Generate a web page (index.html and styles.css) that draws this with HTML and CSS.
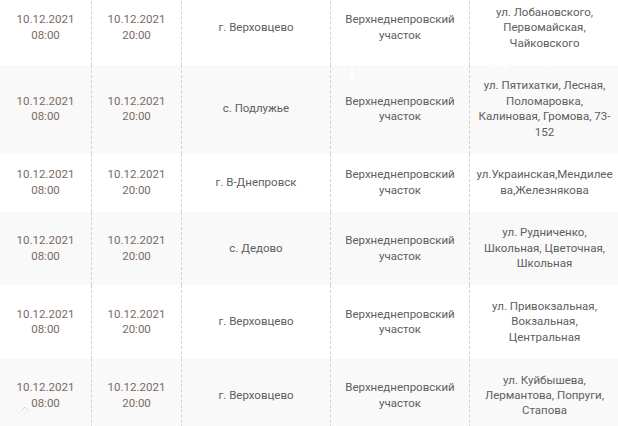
FILE: index.html
```html
<!DOCTYPE html>
<html lang="ru">
<head>
<meta charset="utf-8">
<title>Отключения</title>
<link rel="stylesheet" href="styles.css">
</head>
<body>
<div class="wrap">
  <table class="schedule">
    <colgroup>
      <col class="c-start"><col class="c-end"><col class="c-place"><col class="c-area"><col class="c-streets">
    </colgroup>
    <tbody>
      <tr>
        <td class="date">10.12.2021<br>08:00</td>
        <td class="date">10.12.2021<br>20:00</td>
        <td>г. Верховцево</td>
        <td>Верхнеднепровский участок</td>
        <td class="streets">ул. Лобановского, Первомайская, Чайковского</td>
      </tr>
      <tr>
        <td class="date">10.12.2021<br>08:00</td>
        <td class="date">10.12.2021<br>20:00</td>
        <td>с. Подлужье</td>
        <td>Верхнеднепровский участок</td>
        <td class="streets">ул. Пятихатки, Лесная, Поломаровка, Калиновая, Громова, 73-152</td>
      </tr>
      <tr>
        <td class="date">10.12.2021<br>08:00</td>
        <td class="date">10.12.2021<br>20:00</td>
        <td>г. В-Днепровск</td>
        <td>Верхнеднепровский участок</td>
        <td class="streets">ул.Украинская,Мендилеева,Железнякова</td>
      </tr>
      <tr>
        <td class="date">10.12.2021<br>08:00</td>
        <td class="date">10.12.2021<br>20:00</td>
        <td>с. Дедово</td>
        <td>Верхнеднепровский участок</td>
        <td class="streets">ул. Рудниченко, Школьная, Цветочная, Школьная</td>
      </tr>
      <tr>
        <td class="date">10.12.2021<br>08:00</td>
        <td class="date">10.12.2021<br>20:00</td>
        <td>г. Верховцево</td>
        <td>Верхнеднепровский участок</td>
        <td class="streets">ул. Привокзальная, Вокзальная, Центральная</td>
      </tr>
      <tr>
        <td class="date">10.12.2021<br>08:00</td>
        <td class="date">10.12.2021<br>20:00</td>
        <td>г. Верховцево</td>
        <td>Верхнеднепровский участок</td>
        <td class="streets">ул. Куйбышева, Лермантова, Попруги, Стапова</td>
      </tr>
    </tbody>
  </table>

  <svg class="watermark" width="240" height="60" viewBox="0 0 240 60" aria-hidden="true">
    <g fill="none" stroke="#ffffff" stroke-width="1.5">
      <path d="M12 52 V32 Q12 12 36 12 H102 Q124 12 124 32 V40"/>
      <circle cx="44" cy="22" r="10"/>
      <circle cx="67" cy="22" r="10"/>
      <circle cx="90" cy="22" r="10"/>
    </g>
    <text x="152" y="35" fill="#ffffff" font-family="Roboto, sans-serif" font-size="20">Днипра</text>
  </svg>

  <svg class="totop" width="12" height="10" viewBox="0 0 12 10" aria-hidden="true">
    <path d="M2 6 L6 2 L10 6" fill="none" stroke="#d8d8d8" stroke-width="1"/>
    <circle cx="6" cy="9" r="0.6" fill="#e0e0e0"/>
  </svg>
</div>
</body>
</html>
```

FILE: styles.css
```css
html, body {
  margin: 0;
  padding: 0;
  overflow: hidden;
  background: #ffffff;
}

.wrap {
  position: relative;
  width: 619px;
}

.schedule {
  margin-top: -9px;
  width: 619px;
  table-layout: fixed;
  border-collapse: separate;
  border-spacing: 0;
  font-family: Roboto, "Noto Sans", sans-serif;
  font-size: 11.5px;
  line-height: 15.4px;
  color: #5e5e5e;
}

.c-start { width: 91px; }
.c-end { width: 90px; }
.c-place { width: 149px; }
.c-area { width: 139px; }
.c-streets { width: 150px; }

.schedule td {
  box-sizing: border-box;
  padding: 13.7px 8px;
  text-align: center;
  vertical-align: middle;
}

.schedule td + td {
  border-left: 1px dashed #d2d2d2;
}

.schedule tr:nth-child(even) td {
  background: #f9f9f9;
}

.schedule td.date {
  color: #7a6a5f;
}

.schedule td.streets {
  padding-left: 6px;
  padding-right: 6px;
  overflow-wrap: anywhere;
}

.watermark {
  position: absolute;
  left: 340px;
  top: 40px;
  opacity: 0.85;
  pointer-events: none;
}

.totop {
  position: absolute;
  left: 19px;
  top: 414px;
}
```
